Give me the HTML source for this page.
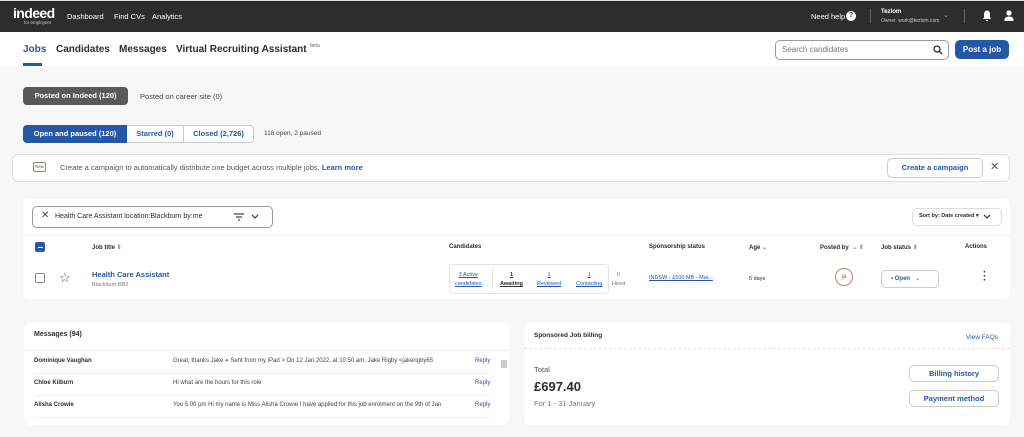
<!DOCTYPE html>
<html><head><meta charset="utf-8"><style>
*{margin:0;padding:0;box-sizing:border-box}
body{width:1024px;height:437px;overflow:hidden;background:#f7f7f7;font-family:"Liberation Sans",sans-serif;color:#2d2d2d;position:relative}
.a{position:absolute;white-space:nowrap}
.top{left:0;top:0;width:1024px;height:32px;background:#2d2d2d;border-top:1px solid #ddd}
.w{color:#fff}
.nav{left:0;top:32px;width:1024px;height:34px;background:#fff}
.card{background:#fff;border-radius:6px}
.b{font-weight:bold}
.lnk{color:#2557a7}
.u{text-decoration:underline}
.btn{border:1px solid #ccc;border-radius:5px;background:#fff;text-align:center}
</style></head><body>
<div class="a top"></div>
<div class="a w b" style="left:13px;top:5px;font-size:14px;letter-spacing:-0.6px">indeed</div>
<div class="a w" style="left:24px;top:20px;font-size:4.5px;color:#ccc">for employers</div>
<div class="a w" style="left:67px;top:12px;font-size:7.5px">Dashboard</div>
<div class="a w" style="left:114px;top:12px;font-size:7.5px">Find CVs</div>
<div class="a w" style="left:152px;top:12px;font-size:7.5px">Analytics</div>
<div class="a w" style="left:811px;top:12px;font-size:7.5px">Need help</div>
<div class="a" style="left:846px;top:11px;width:10px;height:10px;border-radius:50%;background:#fff;color:#2d2d2d;font-size:7px;font-weight:bold;text-align:center;line-height:10px">?</div>
<div class="a" style="left:870px;top:9px;width:1px;height:14px;background:#666"></div>
<div class="a w b" style="left:881px;top:9px;font-size:6px">Tezlom</div>
<div class="a" style="left:881px;top:18px;font-size:5px;color:#ccc">Owner. work@tezlom.com</div>
<div class="a" style="left:943px;top:11px;font-size:7px;color:#aaa">&#8964;</div>
<div class="a" style="left:964px;top:9px;width:1px;height:14px;background:#666"></div>
<svg class="a" style="left:982px;top:10px" width="10" height="12" viewBox="0 0 10 12"><path d="M5 0.5C2.8 0.5 2 2.5 2 4.5V7.5L0.8 9H9.2L8 7.5V4.5C8 2.5 7.2 0.5 5 0.5Z M3.8 10H6.2A1.2 1.2 0 0 1 3.8 10Z" fill="#fff"/></svg>
<svg class="a" style="left:1004px;top:10px" width="10" height="11" viewBox="0 0 10 11"><circle cx="5" cy="3" r="2.6" fill="#fff"/><path d="M0.5 11V9.5C0.5 7.5 3 6.5 5 6.5S9.5 7.5 9.5 9.5V11Z" fill="#fff"/></svg>

<div class="a nav"></div>
<div class="a b lnk" style="left:23px;top:44px;font-size:10px">Jobs</div>
<div class="a" style="left:23px;top:63px;width:19px;height:3px;background:#2557a7"></div>
<div class="a b" style="left:56px;top:44px;font-size:10px">Candidates</div>
<div class="a b" style="left:119px;top:44px;font-size:10px">Messages</div>
<div class="a b" style="left:176px;top:44px;font-size:10px">Virtual Recruiting Assistant</div>
<div class="a" style="left:310px;top:43px;font-size:5px;color:#666">beta</div>
<div class="a" style="left:775px;top:40px;width:174px;height:20px;border:1px solid #999;border-radius:5px;background:#fff"></div>
<div class="a" style="left:782px;top:45px;font-size:8px;color:#767676">Search candidates</div>
<svg class="a" style="left:933px;top:45px" width="10" height="10" viewBox="0 0 10 10"><circle cx="4" cy="4" r="3" stroke="#2d2d2d" stroke-width="1.3" fill="none"/><path d="M6.2 6.2L9 9" stroke="#2d2d2d" stroke-width="1.4"/></svg>
<div class="a b" style="left:955px;top:40px;width:54px;height:19px;background:#2557a7;border-radius:5px;color:#fff;font-size:8px;text-align:center;line-height:19px">Post a job</div>

<div class="a b" style="left:23px;top:87px;width:105px;height:18px;background:#595959;border-radius:4px;color:#fff;font-size:7.5px;text-align:center;line-height:18px">Posted on Indeed (120)</div>
<div class="a" style="left:140px;top:92px;font-size:7.5px;color:#444">Posted on career site (0)</div>

<div class="a" style="left:23px;top:125px;width:231px;height:18px;border:1px solid #ccc;border-radius:4px;background:#fff"></div>
<div class="a b" style="left:23px;top:125px;width:104px;height:18px;background:#2557a7;border-radius:4px 0 0 4px;color:#fff;font-size:7.5px;text-align:center;line-height:18px">Open and paused (120)</div>
<div class="a b lnk" style="left:127px;top:125px;width:57px;height:18px;font-size:7.5px;text-align:center;line-height:18px;border-right:1px solid #ccc">Starred (0)</div>
<div class="a b lnk" style="left:184px;top:125px;width:69px;height:18px;font-size:7.5px;text-align:center;line-height:18px">Closed (2,726)</div>
<div class="a" style="left:264px;top:130px;font-size:6.5px;color:#444">118 open, 2 paused</div>

<div class="a card" style="left:12px;top:154px;width:998px;height:28px;border:1px solid #ddd;border-radius:6px"></div>
<div class="a" style="left:33px;top:162px;width:13px;height:10px;border:1px solid #a08070;border-radius:2px;font-size:4.5px;text-align:center;line-height:8px;color:#555">New</div>
<div class="a" style="left:60px;top:163px;font-size:7.5px;color:#555">Create a campaign to automatically distribute one budget across multiple jobs. <b class="lnk">Learn more</b></div>
<div class="a btn b lnk" style="left:887px;top:158px;width:96px;height:20px;font-size:7.5px;line-height:18px">Create a campaign</div>
<div class="a" style="left:990px;top:160px;font-size:11px;color:#555">&#x2715;</div>

<div class="a card" style="left:23px;top:199px;width:987px;height:100px"></div>
<div class="a" style="left:32px;top:206px;width:241px;height:22px;border:1px solid #999;border-radius:5px"></div>
<div class="a" style="left:41px;top:210px;font-size:10px;color:#444">&#x2715;</div>
<div class="a" style="left:55px;top:213px;font-size:7px">Health Care Assistant location:Blackburn by:me</div>
<svg class="a" style="left:234px;top:213px" width="10" height="8" viewBox="0 0 10 8"><path d="M0 1H10M2 4H8M4 7H6" stroke="#444" stroke-width="1.2"/></svg>
<svg class="a" style="left:251px;top:214px" width="8" height="6" viewBox="0 0 8 6"><path d="M1 1L4 4L7 1" stroke="#444" stroke-width="1.3" fill="none"/></svg>
<div class="a btn" style="left:912px;top:208px;width:90px;height:18px;border-color:#ddd"></div>
<div class="a b" style="left:919px;top:213px;font-size:5.5px">Sort by: Date created &#9662;</div>
<svg class="a" style="left:983px;top:214px" width="8" height="6" viewBox="0 0 8 6"><path d="M1 1L4 4L7 1" stroke="#444" stroke-width="1.3" fill="none"/></svg>
<div class="a" style="left:23px;top:235px;width:987px;height:1px;background:#f0f0f0"></div>
<div class="a" style="left:35px;top:242px;width:10px;height:10px;background:#2557a7;border-radius:2px"></div>
<div class="a" style="left:37.5px;top:246.5px;width:5px;height:1px;background:#fff"></div>
<div class="a b" style="left:92px;top:244px;font-size:6px">Job title <span style="color:#888">&#8661;</span></div>
<div class="a b" style="left:449px;top:244px;font-size:6px">Candidates</div>
<div class="a b" style="left:649px;top:244px;font-size:6px">Sponsorship status</div>
<div class="a b" style="left:749px;top:244px;font-size:6px">Age <span style="color:#888">&#8964;</span></div>
<div class="a b" style="left:820px;top:244px;font-size:6px">Posted by &nbsp;<span style="color:#888">&#8964; &#8661;</span></div>
<div class="a b" style="left:881px;top:244px;font-size:6px">Job status <span style="color:#888">&#8661;</span></div>
<div class="a b" style="left:965px;top:244px;font-size:6px">Actions</div>
<div class="a" style="left:35px;top:273px;width:10px;height:10px;border:1px solid #888;border-radius:2px"></div>
<div class="a" style="left:59px;top:270px;font-size:13px;color:#555">&#9734;</div>
<div class="a b lnk" style="left:92px;top:270px;font-size:7.5px">Health Care Assistant</div>
<div class="a" style="left:92px;top:282px;font-size:5.5px;color:#767676">Blackburn BB2</div>
<div class="a" style="left:449px;top:264px;width:160px;height:30px;border:1px solid #e4e4e4;border-radius:4px"></div>
<div class="a lnk u" style="left:455px;top:271px;font-size:5.5px;text-align:center;line-height:9px">3 Active<br>candidates</div>
<div class="a" style="left:492px;top:268px;width:1px;height:22px;background:#e4e4e4"></div>
<div class="a u" style="left:500px;top:271px;font-size:5.5px;text-align:center;line-height:9px;color:#2d2d2d"><b>1<br>Awaiting</b></div>
<div class="a lnk u" style="left:537px;top:271px;font-size:5.5px;text-align:center;line-height:9px">1<br>Reviewed</div>
<div class="a lnk u" style="left:576px;top:271px;font-size:5.5px;text-align:center;line-height:9px">1<br>Contacting</div>
<div class="a" style="left:612px;top:271px;font-size:5.5px;text-align:center;line-height:9px;color:#c07040">0<br><span style="color:#767676">Hired</span></div>
<div class="a lnk u" style="left:649px;top:275px;font-size:5.5px">INDSW - £500 MB - Mar...</div>
<div class="a" style="left:749px;top:276px;font-size:5.5px">5 days</div>
<div class="a" style="left:835px;top:268px;width:18px;height:18px;border:1px solid #c08070;border-radius:50%;font-size:6px;text-align:center;line-height:16px;color:#a05030">ja</div>
<div class="a btn" style="left:881px;top:270px;width:58px;height:18px;border-color:#ccc"></div>
<div class="a b lnk" style="left:891px;top:275px;font-size:6px">&#8226; Open &nbsp; <span style="color:#888">&#8964;</span></div>
<div class="a b" style="left:983px;top:271px;font-size:10px;line-height:4px">&#183;<br>&#183;<br>&#183;</div>

<div class="a card" style="left:24px;top:323px;width:485px;height:102px"></div>
<div class="a b" style="left:34px;top:331px;font-size:7px">Messages (94)</div>
<div class="a" style="left:24px;top:350px;width:485px;height:1px;background:#eee"></div>
<div class="a b" style="left:34px;top:358px;font-size:6px">Dominique Vaughan</div>
<div class="a" style="left:173px;top:358px;font-size:6px;color:#444">Great, thanks Jake <span style="color:#a07850">&#9679;</span> Sent from my iPad &gt; On 12 Jan 2022, at 10:50 am, Jake Rigby &lt;jakerigby65</div>
<div class="a lnk" style="left:475px;top:358px;font-size:6px">Reply</div>
<div class="a" style="left:34px;top:373px;width:456px;height:1px;background:#f0f0f0"></div>
<div class="a b" style="left:34px;top:380px;font-size:6px">Chloe Kilburn</div>
<div class="a" style="left:173px;top:380px;font-size:6px;color:#444">Hi what are the hours for this role</div>
<div class="a lnk" style="left:475px;top:380px;font-size:6px">Reply</div>
<div class="a" style="left:34px;top:395px;width:456px;height:1px;background:#f0f0f0"></div>
<div class="a b" style="left:34px;top:402px;font-size:6px">Alisha Crowie</div>
<div class="a" style="left:173px;top:402px;font-size:6px;color:#444">You 5:00 pm Hi my name is Miss Alisha Crowie I have applied for this job enrolment on the 9th of Jan</div>
<div class="a lnk" style="left:475px;top:402px;font-size:6px">Reply</div>
<div class="a" style="left:34px;top:417px;width:456px;height:1px;background:#f0f0f0"></div>
<div class="a" style="left:501px;top:360px;width:6px;height:8px;background:#ccc"></div>

<div class="a card" style="left:524px;top:323px;width:486px;height:102px"></div>
<div class="a b" style="left:534px;top:332px;font-size:6.5px">Sponsored Job billing</div>
<div class="a lnk" style="left:966px;top:334px;font-size:6.5px">View FAQs</div>
<div class="a" style="left:524px;top:348px;width:486px;height:1px;border-top:1px dashed #e4e4e4"></div>
<div class="a" style="left:534px;top:365px;font-size:7.5px;color:#555">Total</div>
<div class="a b" style="left:534px;top:379px;font-size:13px">£697.40</div>
<div class="a" style="left:534px;top:399px;font-size:7.5px;color:#767676">For 1 - 31 January</div>
<div class="a btn b lnk" style="left:909px;top:365px;width:90px;height:17px;font-size:7.5px;line-height:15px">Billing history</div>
<div class="a btn b lnk" style="left:909px;top:390px;width:90px;height:17px;font-size:7.5px;line-height:15px">Payment method</div>
</body></html>
